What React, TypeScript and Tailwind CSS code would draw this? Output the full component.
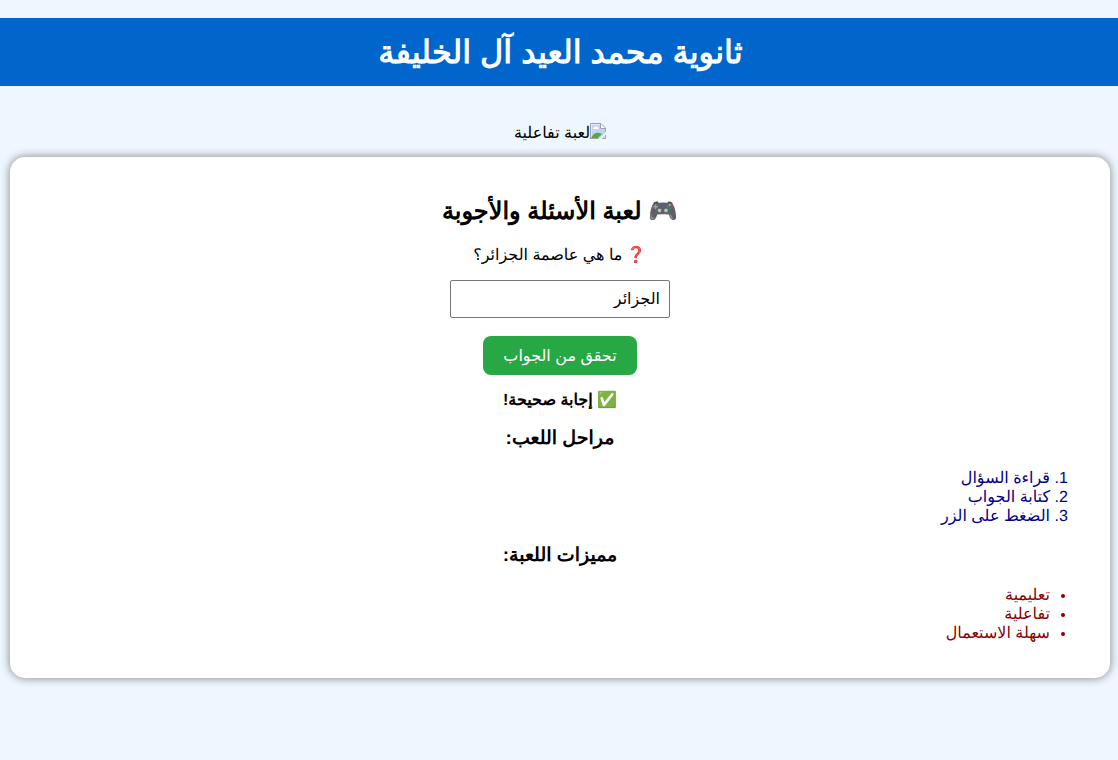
import { useState } from "react";

const steps = ["قراءة السؤال", "كتابة الجواب", "الضغط على الزر"];
const features = ["تعليمية", "تفاعلية", "سهلة الاستعمال"];

function BrokenImageIcon() {
  return (
    <svg width="16" height="16" viewBox="0 0 16 16" aria-hidden="true">
      <path d="M0.5 15.5V0.5H11L15.5 5v10.5z" fill="#fff" />
      <path d="M1.5 1.5H10V6h5v9H1.5z" fill="#c3d3f5" />
      <path d="M3 6a1.5 1.5 0 0 1 1.5-1.7A2 2 0 0 1 8 4.5 1.2 1.2 0 0 1 8.5 6z" fill="#fff" />
      <path d="M1.5 15v-1C4 9.500 8 8.500 12 11L8 15z" fill="#55ab3c" />
      <path d="M9 16L16 9v2.5L11.5 16z" fill="#eef6ff" />
      <path d="M0.5 16V0.5H11L15.5 5v4M10.5 1v4.5H15M0.5 15.5H8.500M12 15.5h3.5V12" fill="none" stroke="#a0a0a0" />
    </svg>
  );
}

export default function App() {
  const [answer, setAnswer] = useState("الجزائر");
  const [result, setResult] = useState("✅ إجابة صحيحة!");

  function checkAnswer() {
    setResult(
      answer.trim() === "الجزائر" ? "✅ إجابة صحيحة!" : "❌ إجابة خاطئة!"
    );
  }

  return (
    <div
      dir="rtl"
      className="min-h-screen bg-[#eef6ff] pt-[18px] text-center font-['Liberation_Sans',Arial,sans-serif] text-base leading-[19px] text-black [text-rendering:geometricPrecision]"
    >
      <h1 className="bg-[#0066cc] py-4 pl-[3px] text-[32px] leading-9 font-bold text-white">
        ثانوية محمد العيد آل الخليفة
      </h1>

      <div className="mt-[37px] flex justify-center pl-[2px]">
        <BrokenImageIcon />
        <span className="pt-px">لعبة تفاعلية</span>
      </div>

      <main className="mt-[14px] mr-2 ml-[10px] rounded-[15px] bg-white px-5 pt-[41px] pb-[35px] shadow-[0_0_10px_gray]">
        <h2 className="text-2xl leading-7 font-bold">
          🎮 لعبة الأسئلة والأجوبة
        </h2>
        <label htmlFor="answer" className="mt-5 block">
          ❓ ما هي عاصمة الجزائر؟
        </label>
        <input
          id="answer"
          type="text"
          value={answer}
          onChange={(e) => setAnswer(e.target.value)}
          className="mx-auto mt-[15px] block h-[38px] w-[220px] rounded-[2px] border border-[#767676] bg-white px-[9px] pb-[2px] font-['Liberation_Sans','DejaVu_Sans',sans-serif]"
        />
        <button
          type="button"
          onClick={checkAnswer}
          className="mx-auto mt-[18px] block rounded-lg bg-[#28a745] px-5 py-[10px] font-['Liberation_Sans','DejaVu_Sans',sans-serif] text-white"
        >
          تحقق من الجواب
        </button>
        <p className="mt-4 font-bold">{result}</p>

        <h3 className="mt-[18px] text-[19px] leading-[21px] font-bold">مراحل اللعب:</h3>
        <ol className="mt-5 list-decimal pr-10 text-right text-[#00008b]">
          {steps.map((step) => (
            <li key={step}>{step}</li>
          ))}
        </ol>

        <h3 className="mt-[19px] text-[19px] leading-[21px] font-bold">مميزات اللعبة:</h3>
        <ul className="mt-5 list-disc pr-10 text-right text-[#8b0000]">
          {features.map((feature) => (
            <li key={feature}>{feature}</li>
          ))}
        </ul>
      </main>
    </div>
  );
}
